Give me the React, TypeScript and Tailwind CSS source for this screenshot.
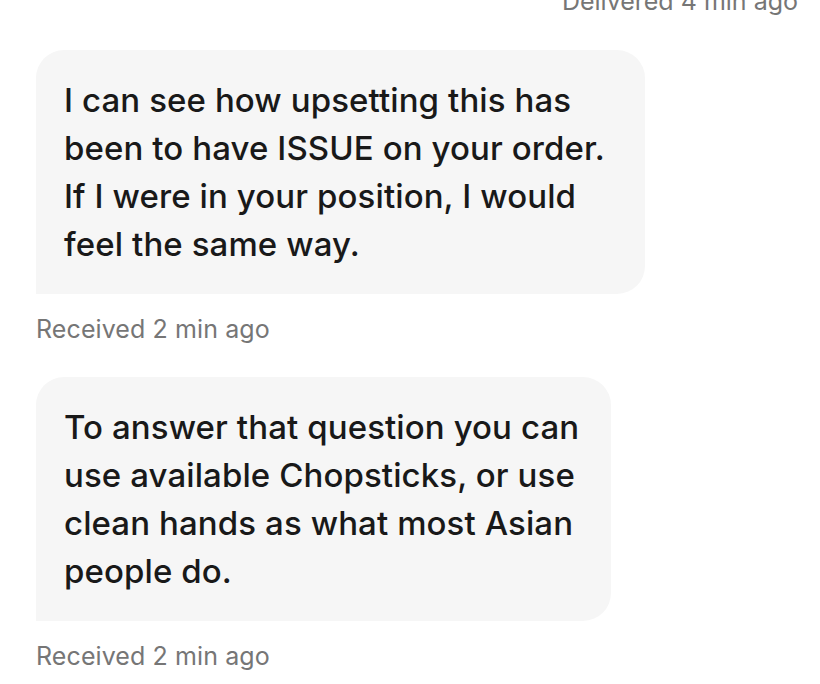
import React from "react";

const font = { fontFamily: "Inter, 'Open Sans', sans-serif" };

function Bubble({ lines, width }: { lines: string[]; width: string }) {
  return (
    <div
      className={`ml-[36px] ${width} rounded-[28px] rounded-bl-none bg-[#f6f6f6] pl-[28px] pt-[26px] pb-[26px] text-[33px] leading-[48px] font-medium tracking-[0.1px] text-[#191919]`}
    >
      {lines.map((l, i) => (
        <div key={i} className="whitespace-nowrap">
          {l}
        </div>
      ))}
    </div>
  );
}

export default function App() {
  return (
    <div className="h-[684px] w-[820px] overflow-hidden bg-white" style={font}>
      <div className="mt-[-14px] pr-[22px] text-right text-[25px] leading-[30px] text-[#767676]">
        Delivered 4 min ago
      </div>
      <div className="mt-[34px]">
        <Bubble
          width="w-[609px]"
          lines={[
            "I can see how upsetting this has",
            "been to have ISSUE on your order.",
            "If I were in your position, I would",
            "feel the same way.",
          ]}
        />
      </div>
      <div className="ml-[36px] mt-[20px] text-[25px] leading-[30px] tracking-[0.1px] text-[#767676]">
        Received 2 min ago
      </div>
      <div className="mt-[33px]">
        <Bubble
          width="w-[575px]"
          lines={[
            "To answer that question you can",
            "use available Chopsticks, or use",
            "clean hands as what most Asian",
            "people do.",
          ]}
        />
      </div>
      <div className="ml-[36px] mt-[20px] text-[25px] leading-[30px] tracking-[0.1px] text-[#767676]">
        Received 2 min ago
      </div>
    </div>
  );
}
